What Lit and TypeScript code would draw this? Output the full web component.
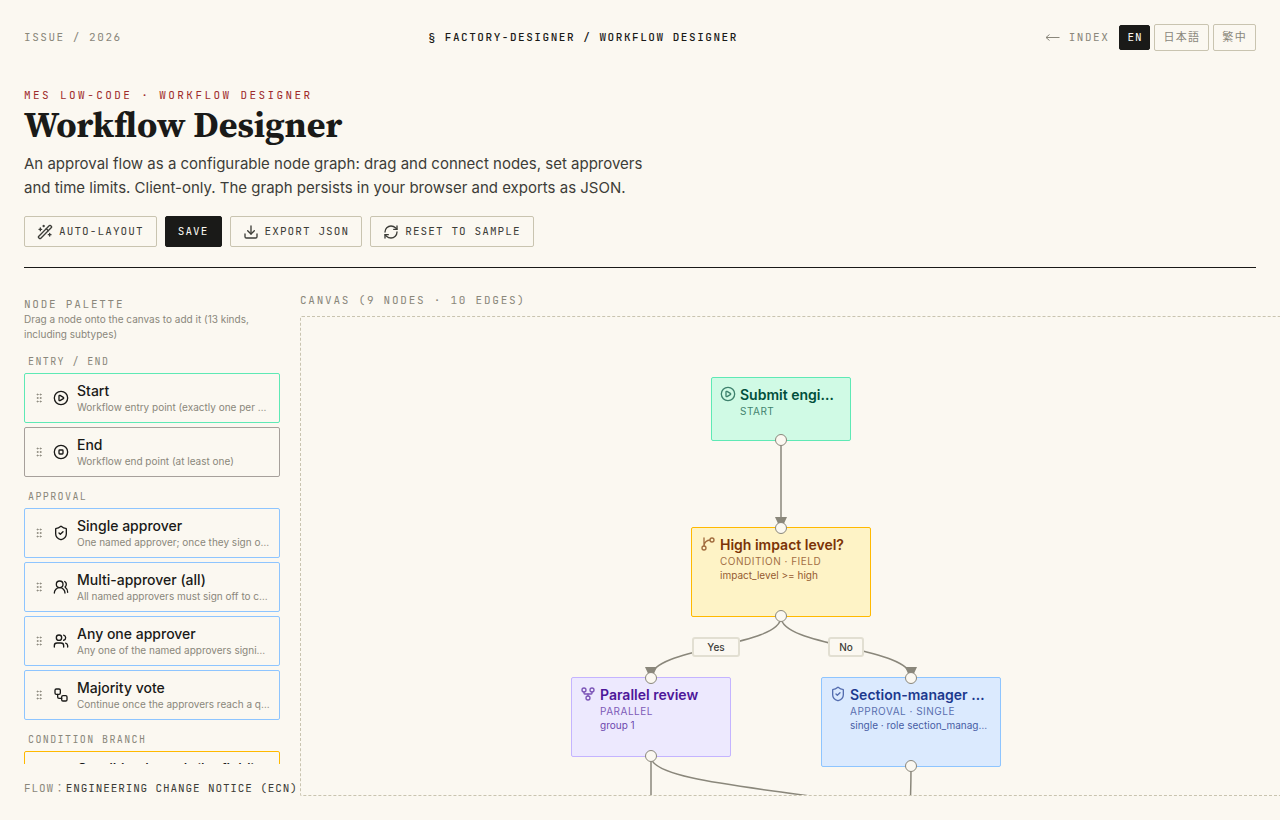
import { LitElement, html, svg, css, TemplateResult } from "lit";
import { customElement, state } from "lit/decorators.js";
import { classMap } from "lit/directives/class-map.js";
import { styleMap } from "lit/directives/style-map.js";

type IconName =
  | "wand" | "download" | "refresh" | "grip" | "play" | "stop"
  | "shield" | "usersRound" | "users" | "workflow" | "branch" | "fork";

const ICONS: Record<IconName, TemplateResult> = {
  wand: svg`<path d="m21.64 3.64-1.28-1.28a1.21 1.21 0 0 0-1.72 0L2.36 18.64a1.21 1.21 0 0 0 0 1.72l1.28 1.28a1.2 1.2 0 0 0 1.72 0L21.64 5.36a1.2 1.2 0 0 0 0-1.72"/><path d="m14 7 3 3M5 6v4M19 14v4M10 2v2M7 8H3M21 16h-4M11 3H9"/>`,
  download: svg`<path d="M12 15V3"/><path d="M21 15v4a2 2 0 0 1-2 2H5a2 2 0 0 1-2-2v-4"/><path d="m7 10 5 5 5-5"/>`,
  refresh: svg`<path d="M3 12a9 9 0 0 1 9-9 9.75 9.75 0 0 1 6.74 2.74L21 8"/><path d="M21 3v5h-5"/><path d="M21 12a9 9 0 0 1-9 9 9.75 9.75 0 0 1-6.74-2.74L3 16"/><path d="M8 16H3v5"/>`,
  grip: svg`<circle cx="9" cy="12" r="1"/><circle cx="9" cy="5" r="1"/><circle cx="9" cy="19" r="1"/><circle cx="15" cy="12" r="1"/><circle cx="15" cy="5" r="1"/><circle cx="15" cy="19" r="1"/>`,
  play: svg`<circle cx="12" cy="12" r="10"/><path d="M9 9.003a1 1 0 0 1 1.517-.859l4.997 2.997a1 1 0 0 1 0 1.718l-4.997 2.997A1 1 0 0 1 9 14.996z"/>`,
  stop: svg`<circle cx="12" cy="12" r="10"/><rect x="9" y="9" width="6" height="6" rx="1"/>`,
  shield: svg`<path d="M20 13c0 5-3.5 7.5-7.66 8.95a1 1 0 0 1-.67-.01C7.5 20.5 4 18 4 13V6a1 1 0 0 1 1-1c2 0 4.5-1.2 6.24-2.72a1.17 1.17 0 0 1 1.52 0C14.51 3.81 17 5 19 5a1 1 0 0 1 1 1z"/><path d="m9 12 2 2 4-4"/>`,
  usersRound: svg`<path d="M18 21a8 8 0 0 0-16 0"/><circle cx="10" cy="8" r="5"/><path d="M22 20c0-3.37-2-6.5-4-8a5 5 0 0 0-.45-8.3"/>`,
  users: svg`<path d="M16 21v-2a4 4 0 0 0-4-4H6a4 4 0 0 0-4 4v2"/><circle cx="9" cy="7" r="4"/><path d="M22 21v-2a4 4 0 0 0-3-3.87"/><path d="M16 3.13a4 4 0 0 1 0 7.75"/>`,
  workflow: svg`<rect width="8" height="8" x="3" y="3" rx="2"/><path d="M7 11v4a2 2 0 0 0 2 2h4"/><rect width="8" height="8" x="13" y="13" rx="2"/>`,
  branch: svg`<path d="M15 6a9 9 0 0 0-9 9V3"/><circle cx="18" cy="6" r="3"/><circle cx="6" cy="18" r="3"/>`,
  fork: svg`<circle cx="12" cy="18" r="3"/><circle cx="6" cy="6" r="3"/><circle cx="18" cy="6" r="3"/><path d="M18 9v2c0 .6-.4 1-1 1H7c-.6 0-1-.4-1-1V9"/><path d="M12 12v3"/>`,
};

const icon = (name: IconName, size = 16) => html`<svg
  width=${size} height=${size} viewBox="0 0 24 24" fill="none" stroke="currentColor"
  stroke-width="2" stroke-linecap="round" stroke-linejoin="round" aria-hidden="true"
>${ICONS[name]}</svg>`;

const shared = css`
  :host {
    --paper: #fbf8f1;
    --ink: #1a1a18;
    --soft: #3d3d38;
    --muted: #8a877b;
    --rule: #c9c4b0;
    --mono: "JetBrains Mono", "Liberation Mono", "Noto Sans CJK JP", monospace;
    --sans: Inter, "Noto Sans CJK JP", sans-serif;
    --serif: "Source Serif 4", "Source Serif Pro", "Noto Serif", "Liberation Serif", serif;
    box-sizing: border-box;
  }
  * { box-sizing: border-box; }
  svg { display: block; flex: none; }
  h1, h2, h3, p, ul { margin: 0; padding: 0; }
  ul { list-style: none; }
`;

type Tone = "green" | "gray" | "blue" | "amber" | "violet";

interface PaletteItem { icon: IconName; tone: Tone; name: string; hint: string; }
interface PaletteGroup { label: string; items: PaletteItem[]; }

const PALETTE: PaletteGroup[] = [
  { label: "Entry / End", items: [
    { icon: "play", tone: "green", name: "Start", hint: "Workflow entry point (exactly one per workflow)" },
    { icon: "stop", tone: "gray", name: "End", hint: "Workflow end point (at least one)" },
  ] },
  { label: "Approval", items: [
    { icon: "shield", tone: "blue", name: "Single approver", hint: "One named approver; once they sign off, the flow continues" },
    { icon: "usersRound", tone: "blue", name: "Multi-approver (all)", hint: "All named approvers must sign off to continue" },
    { icon: "users", tone: "blue", name: "Any one approver", hint: "Any one of the named approvers signing is enough" },
    { icon: "workflow", tone: "blue", name: "Majority vote", hint: "Continue once the approvers reach a quorum" },
  ] },
  { label: "Condition branch", items: [
    { icon: "branch", tone: "amber", name: "Condition branch (by field)", hint: "Route by the value of a form field" },
  ] },
];

@customElement("node-palette")
export class NodePalette extends LitElement {
  static styles = [shared, css`
    :host { display: flex; flex-direction: column; min-height: 0; font-family: var(--sans); }
    .title {
      font: 400 11px/15px var(--mono);
      letter-spacing: 0.16em;
      text-transform: uppercase;
      color: var(--muted);
    }
    .hint { font-size: 10px; line-height: 15px; color: var(--muted); }
    .scroll {
      flex: 1;
      min-height: 0;
      overflow: hidden;
      display: flex;
      flex-direction: column;
      gap: 12px;
      padding-top: 12px;
    }
    .label {
      font: 400 10px/15px var(--mono);
      letter-spacing: 0.14em;
      text-transform: uppercase;
      color: var(--muted);
      padding: 0 4px 4px;
    }
    .group { flex: none; }
    .items { display: grid; grid-template-columns: minmax(0, 1fr); gap: 4px; }
    .item {
      display: flex;
      align-items: center;
      gap: 8px;
      height: 50px;
      padding: 0 8px;
      border: 1px solid;
      border-radius: 2px;
      cursor: grab;
    }
    .green { border-color: #5ee9b5; }
    .gray { border-color: #a6a09b; }
    .blue { border-color: #8ec5ff; }
    .amber { border-color: #ffb900; }
    .grip { color: var(--muted); }
    .kind { color: var(--ink); }
    .text { min-width: 0; }
    .name { font-size: 14px; line-height: 18px; font-weight: 500; color: var(--ink); }
    .desc {
      font-size: 10px;
      line-height: 15px;
      color: var(--muted);
      white-space: nowrap;
      overflow: hidden;
      text-overflow: ellipsis;
    }
  `];

  render() {
    return html`
      <h2 class="title">Node palette</h2>
      <p class="hint">Drag a node onto the canvas to add it (13 kinds, including subtypes)</p>
      <div class="scroll">
        ${PALETTE.map((g) => html`
          <section class="group">
            <h3 class="label">${g.label}</h3>
            <ul class="items">
              ${g.items.map((i) => html`
                <li class=${classMap({ item: true, [i.tone]: true })} draggable="true">
                  <span class="grip">${icon("grip", 12)}</span>
                  <span class="kind">${icon(i.icon)}</span>
                  <div class="text">
                    <div class="name">${i.name}</div>
                    <div class="desc">${i.hint}</div>
                  </div>
                </li>`)}
            </ul>
          </section>`)}
      </div>
    `;
  }
}

interface FlowNode {
  icon: IconName; tone: Tone; title: string; kind: string; detail?: string;
  x: number; y: number; w: number; h: number; input: boolean;
}

const NODES: FlowNode[] = [
  { icon: "play", tone: "green", title: "Submit engineering change", kind: "Start", x: 410, y: 60, w: 140, h: 64, input: false },
  { icon: "branch", tone: "amber", title: "High impact level?", kind: "Condition · field", detail: "impact_level >= high", x: 390, y: 210, w: 180, h: 90, input: true },
  { icon: "fork", tone: "violet", title: "Parallel review", kind: "Parallel", detail: "group 1", x: 270, y: 360, w: 160, h: 80, input: true },
  { icon: "shield", tone: "blue", title: "Section-manager approval", kind: "Approval · single", detail: "single · role section_manager", x: 520, y: 360, w: 180, h: 90, input: true },
];

const EDGES = [
  "M480 124V200",
  "M480 300C480 330 350 330 350 360",
  "M480 300C480 330 610 330 610 360",
  "M350 440V510",
  "M350 440C350 475 610 475 610 510",
  "M610 450C610 480 609 480 609 510",
];

const ARROWS = [[480, 200], [350, 350], [610, 350]];

const LABELS = [
  { text: "Yes", x: 391, w: 48 },
  { text: "No", x: 527, w: 36 },
];

@customElement("flow-canvas")
export class FlowCanvas extends LitElement {
  static styles = [shared, css`
    :host {
      display: block;
      position: relative;
      overflow: hidden;
      border: 1px dashed var(--rule);
      border-right: 0;
      border-radius: 2px 0 0 2px;
      font-family: var(--sans);
    }
    .edges { position: absolute; inset: 0; width: 100%; height: 100%; }
    .edges path { fill: none; stroke: var(--muted); stroke-width: 1.5; }
    .edges polygon { fill: var(--muted); }
    .node {
      position: absolute;
      display: flex;
      align-items: flex-start;
      gap: 4px;
      padding: 8px 12px 8px 8px;
      border: 1px solid;
      border-radius: 2px;
    }
    .green { background: #d0fae5; border-color: #5ee9b5; color: #004f3b; }
    .amber { background: #fef3c6; border-color: #ffb900; color: #7b3306; }
    .violet { background: #ede9fe; border-color: #c4b4ff; color: #4d179a; }
    .blue { background: #dbeafe; border-color: #8ec5ff; color: #1c398e; }
    .glyph { opacity: 0.7; }
    .text { min-width: 0; flex: 1; }
    .title, .kind, .detail { white-space: nowrap; overflow: hidden; text-overflow: ellipsis; }
    .title { font-size: 14px; line-height: 18px; font-weight: 600; }
    .kind {
      font-size: 10px;
      line-height: 14px;
      letter-spacing: 0.05em;
      text-transform: uppercase;
      opacity: 0.7;
    }
    .detail { font-size: 10px; line-height: 14px; opacity: 0.8; }
    .port {
      position: absolute;
      left: 50%;
      width: 12px;
      height: 12px;
      margin-left: -6px;
      border: 1px solid var(--muted);
      border-radius: 50%;
      background: var(--paper);
    }
    .in { top: -6px; }
    .out { bottom: -6px; }
    .tag {
      position: absolute;
      top: 320px;
      height: 20px;
      border: 2px solid #e2dfd2;
      border-radius: 3px;
      background: var(--paper);
      color: var(--soft);
      font-size: 10px;
      font-weight: 500;
      line-height: 16px;
      text-align: center;
    }
  `];

  render() {
    return html`
      <svg class="edges" aria-hidden="true">
        ${EDGES.map((d) => svg`<path d=${d}></path>`)}
        ${ARROWS.map(([x, y]) => svg`<polygon points="${x - 6},${y} ${x + 6},${y} ${x},${y + 13}"></polygon>`)}
      </svg>
      ${LABELS.map((l) => html`<span class="tag" style=${styleMap({ left: `${l.x}px`, width: `${l.w}px` })}>${l.text}</span>`)}
      ${NODES.map((n) => html`
        <div class=${classMap({ node: true, [n.tone]: true })}
          style=${styleMap({ left: `${n.x}px`, top: `${n.y}px`, width: `${n.w}px`, height: `${n.h}px` })}>
          <span class="glyph">${icon(n.icon)}</span>
          <div class="text">
            <div class="title">${n.title}</div>
            <div class="kind">${n.kind}</div>
            ${n.detail ? html`<div class="detail">${n.detail}</div>` : null}
          </div>
          ${n.input ? html`<span class="port in"></span>` : null}
          <span class="port out"></span>
        </div>`)}
    `;
  }
}

@customElement("app-root")
export class AppRoot extends LitElement {
  @state() private lang = "EN";

  static styles = [shared, css`
    :host {
      display: flex;
      flex-direction: column;
      height: 100vh;
      padding: 24px;
      overflow: hidden;
      background: var(--paper);
      color: var(--ink);
      font-family: var(--sans);
    }
    .topbar {
      display: flex;
      align-items: center;
      justify-content: space-between;
      font: 400 11px/17px var(--mono);
      letter-spacing: 0.14em;
      text-transform: uppercase;
      color: var(--muted);
    }
    .crumb { color: var(--ink); font-weight: 500; }
    .nav { display: flex; align-items: center; gap: 10px; }
    .index { display: flex; align-items: center; gap: 9px; color: inherit; text-decoration: none; }
    .langs { display: flex; align-items: center; gap: 4px; }
    .lang {
      font: 400 11px/17px var(--mono);
      letter-spacing: 0.08em;
      padding: 3px 7px;
      border: 1px solid var(--ink);
      border-radius: 2px;
      background: transparent;
      color: var(--muted);
    }
    .lang.wide { padding: 4px 8px; letter-spacing: 0.12em; border-color: var(--rule); }
    .lang.on { background: var(--ink); color: var(--paper); }

    .intro {
      display: flex;
      flex-direction: column;
      align-items: flex-start;
      padding: 36px 0 20px;
      border-bottom: 1px solid var(--ink);
    }
    .eyebrow {
      font: 400 11px/17px var(--mono);
      letter-spacing: 0.22em;
      text-transform: uppercase;
      color: #9e2b2b;
    }
    .heading { font: 700 36px/40px var(--serif); margin: 1px 0 7px; }
    .lede { max-width: 640px; font-size: 15px; line-height: 24px; color: var(--soft); }
    .actions { display: flex; gap: 8px; padding-top: 16px; }
    .btn {
      display: flex;
      align-items: center;
      gap: 6px;
      height: 31px;
      padding: 0 12px;
      border: 1px solid var(--rule);
      border-radius: 2px;
      background: transparent;
      color: var(--soft);
      font: 400 11px/17px var(--mono);
      letter-spacing: 0.1em;
      text-transform: uppercase;
    }
    .btn.primary { background: var(--ink); border-color: var(--ink); color: var(--paper); }

    .work {
      flex: 1;
      min-height: 0;
      display: grid;
      grid-template-columns: 256px minmax(0, 1fr);
      grid-template-rows: minmax(0, 1fr);
      gap: 20px;
      padding-top: 24px;
    }
    .side { display: flex; flex-direction: column; min-height: 0; padding-top: 5px; }
    .palette { flex: 1; }
    .flow {
      padding-top: 16px;
      font: 400 11px/16px var(--mono);
      letter-spacing: 0.08em;
      text-transform: uppercase;
      white-space: nowrap;
      color: var(--muted);
    }
    .flow b { font-weight: 400; color: var(--soft); }
    .board { display: flex; flex-direction: column; min-height: 0; margin-right: -24px; }
    .caption {
      font: 400 11px/17px var(--mono);
      letter-spacing: 0.16em;
      text-transform: uppercase;
      color: var(--muted);
      padding-bottom: 7px;
    }
    .canvas { flex: 1; min-height: 0; }
  `];

  render() {
    return html`
      <header class="topbar">
        <span>Issue / 2026</span>
        <span class="crumb">§ factory-designer / workflow designer</span>
        <nav class="nav">
          <a class="index" href="#">
            <svg width="15" height="9" viewBox="0 0 15 9" fill="none" stroke="currentColor" aria-hidden="true">
              <path d="M1 4.5H14.5M4.5 1.5 1 4.5 4.5 7.5"></path>
            </svg>
            Index
          </a>
          <div class="langs">
            ${["EN", "日本語", "繁中"].map((l) => html`
              <button class=${classMap({ lang: true, wide: l !== "EN", on: l === this.lang })}
                @click=${() => (this.lang = l)}>${l}</button>`)}
          </div>
        </nav>
      </header>

      <section class="intro">
        <p class="eyebrow">MES Low-code · Workflow Designer</p>
        <h1 class="heading">Workflow Designer</h1>
        <p class="lede">An approval flow as a configurable node graph: drag and connect nodes, set approvers and time limits. Client-only. The graph persists in your browser and exports as JSON.</p>
        <div class="actions">
          <button class="btn">${icon("wand")}Auto-layout</button>
          <button class="btn primary">Save</button>
          <button class="btn">${icon("download")}Export JSON</button>
          <button class="btn">${icon("refresh")}Reset to sample</button>
        </div>
      </section>

      <main class="work">
        <aside class="side">
          <node-palette class="palette"></node-palette>
          <p class="flow">Flow：<b>Engineering Change Notice (ECN)</b></p>
        </aside>
        <section class="board">
          <h2 class="caption">Canvas (9 nodes · 10 edges)</h2>
          <flow-canvas class="canvas"></flow-canvas>
        </section>
      </main>
    `;
  }
}
